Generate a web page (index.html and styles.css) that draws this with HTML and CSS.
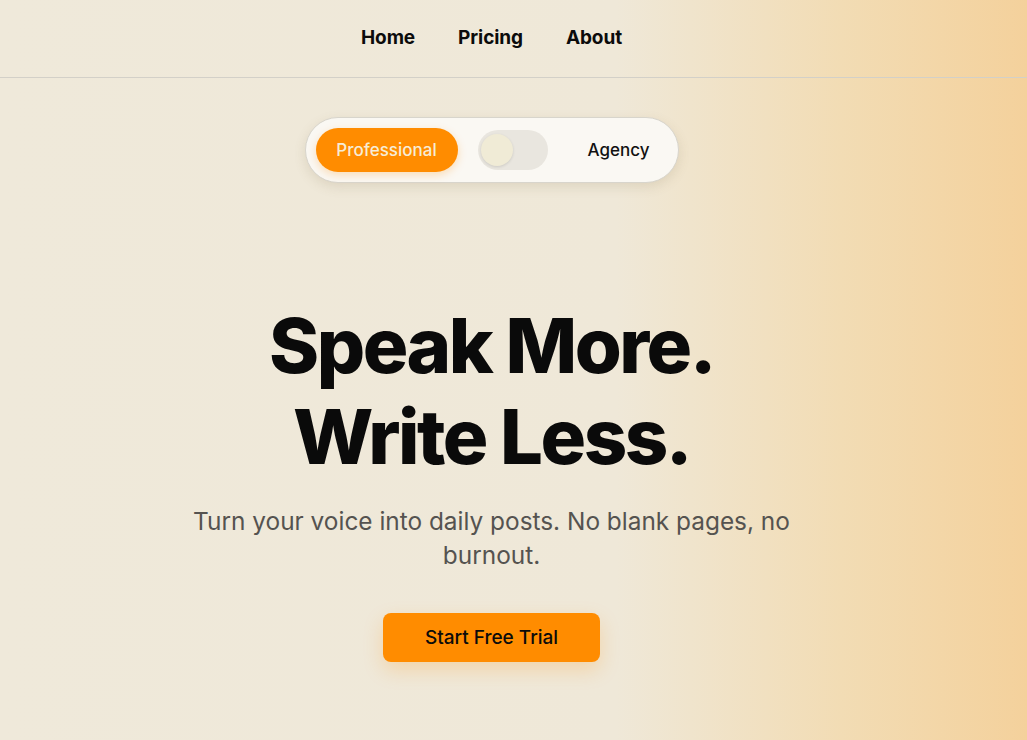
FILE: index.html
```html
<!DOCTYPE html>
<html lang="en">
<head>
<meta charset="utf-8">
<title>Speak More. Write Less.</title>
<link rel="stylesheet" href="styles.css">
</head>
<body>
<div class="page">
  <header class="topbar">
    <nav class="nav">
      <a href="#" class="nav-link">Home</a>
      <a href="#" class="nav-link">Pricing</a>
      <a href="#" class="nav-link">About</a>
    </nav>
  </header>
  <main class="hero">
    <div class="plan-toggle">
      <button class="plan-active">Professional</button>
      <span class="switch"><span class="knob"></span></span>
      <span class="plan-label">Agency</span>
    </div>
    <h1 class="headline">Speak More.<br>Write Less.</h1>
    <p class="subtitle">Turn your voice into daily posts. No blank pages, no burnout.</p>
    <button class="cta">Start Free Trial</button>
  </main>
</div>
</body>
</html>
```

FILE: styles.css
```css
* { box-sizing: border-box; }
html, body { margin: 0; padding: 0; height: 100%; }
body {
  font-family: Inter, "Liberation Sans", sans-serif;
  color: #0b0b0b;
  background: linear-gradient(90deg, #efe9da 0%, #efe8d8 60%, #f2dcb4 82%, #f4d19c 100%);
  min-height: 740px;
  overflow: hidden;
}
.page { min-height: 740px; display: flex; flex-direction: column; }
.topbar {
  height: 78px;
  border-bottom: 1px solid #d3d0c8;
  display: flex;
  align-items: center;
  justify-content: center;
  padding-right: 44px;
}
.nav { display: flex; gap: 43px; margin-top: -2px; }
.nav-link {
  color: #0b0b0b;
  text-decoration: none;
  font-weight: 700;
  font-size: 19px;
  letter-spacing: -0.1px;
}
.hero {
  display: flex;
  flex-direction: column;
  align-items: center;
  padding-top: 39px;
  padding-right: 44px;
}
.plan-toggle {
  display: flex;
  align-items: center;
  width: 374px;
  height: 66px;
  padding: 0 10px;
  background: #faf8f3;
  border: 1px solid #d8d5cc;
  border-radius: 33px;
  box-shadow: 0 4px 12px rgba(120, 100, 60, 0.15);
}
.plan-active {
  width: 142px;
  height: 44px;
  border: none;
  border-radius: 22px;
  background: #ff8c00;
  color: #f7ecd6;
  font-family: inherit;
  font-size: 17px;
  font-weight: 500;
  box-shadow: 0 3px 8px rgba(255, 140, 0, 0.25);
}
.switch {
  display: flex;
  align-items: center;
  width: 70px;
  height: 40px;
  margin-left: 20px;
  border-radius: 20px;
  background: #e9e6df;
  padding-left: 3px;
}
.knob {
  width: 32px;
  height: 32px;
  border-radius: 50%;
  background: #f0ebd6;
  box-shadow: 0 1px 3px rgba(0, 0, 0, 0.12);
}
.plan-label {
  margin-left: 40px;
  font-size: 17px;
  font-weight: 500;
  color: #111;
}
.headline {
  margin: 117px 0 0;
  font-size: 76px;
  line-height: 91px;
  font-weight: 800;
  letter-spacing: -2.5px;
  text-align: center;
  color: #0a0a0a;
}
.subtitle {
  margin: 22px 0 0;
  max-width: 620px;
  font-size: 24.4px;
  line-height: 34px;
  color: #555350;
  text-align: center;
}
.cta {
  margin-top: 41px;
  width: 217px;
  height: 49px;
  border: none;
  border-radius: 8px;
  background: #ff8c00;
  color: #0b0b0b;
  font-family: inherit;
  font-size: 19px;
  font-weight: 500;
  box-shadow: 0 8px 20px rgba(255, 140, 0, 0.22);
}
```
